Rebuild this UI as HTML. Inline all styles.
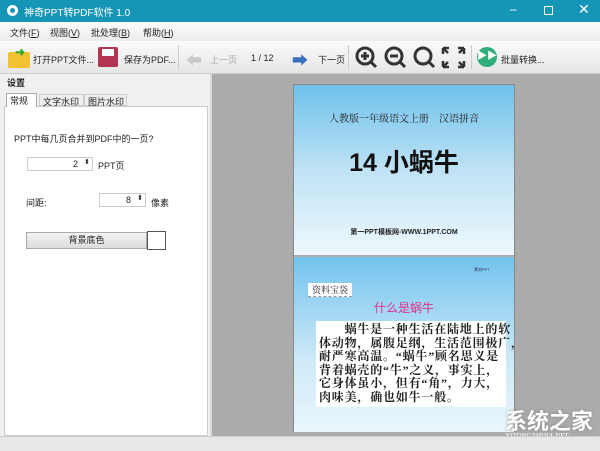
<!DOCTYPE html>
<html><head><meta charset="utf-8"><style>
*{margin:0;padding:0;box-sizing:border-box}
body{width:600px;height:451px;overflow:hidden;font-family:"Liberation Sans","Noto Sans CJK SC",sans-serif;font-size:9px;color:#222;background:#f0f0f0;position:relative}
.a{position:absolute}
.title{left:0;top:0;width:600px;height:22px;background:#1596b6;color:#fff;font-size:10px}
.menu{left:0;top:22px;width:600px;height:19px;background:linear-gradient(#fbfbfb,#ececec)}
.tool{left:0;top:41px;width:600px;height:33px;background:linear-gradient(#fafafa,#e6e6e6);border-bottom:1px solid #ccc}
.sep{width:1px;height:24px;background:#ccc;top:4px}
.right{left:212px;top:74px;width:388px;height:362px;background:#ababab}
.left{left:0;top:74px;width:212px;height:362px;background:#f0f0f0;border-right:2px solid #d8d8d8}
.panel{left:4px;top:106px;width:204px;height:330px;background:#fff;border:1px solid #ccc}
.spin{background:#fff;border:1px solid #ccc;height:14px;text-align:right;padding-right:14px;line-height:12px}
.slide{left:293px;top:84px;width:222px;height:348px;border:1px solid #888}
.s1{left:0;top:0;width:220px;height:170px;background:linear-gradient(#6fc0ea,#bfe3f6 50%,#eef8fd)}
.s2{left:0;top:172px;width:220px;height:175px;background:linear-gradient(#72c4ee,#cfeaf8 60%,#e9f6fc)}
.status{left:0;top:436px;width:600px;height:15px;background:#e8e8e8;border-top:1px solid #ccc}
.serif{font-family:"Liberation Serif","Noto Serif CJK SC",serif}
</style></head><body>
<div class="a title"><div class="a" style="left:7px;top:5px;width:11px;height:11px;border-radius:50%;background:#fff"><div class="a" style="left:3px;top:3px;width:5px;height:5px;border-radius:50%;background:#1596b6"></div></div><span class="a" style="left:24px;top:4px">神奇PPT转PDF软件 1.0</span>
<span class="a" style="left:510px;top:2px;font-size:12px">–</span><div class="a" style="left:544px;top:6px;width:9px;height:9px;border:1px solid #fff"></div><span class="a" style="left:578px;top:1px;font-size:14px">✕</span></div>
<div class="a menu"><span class="a" style="left:10px;top:4px">文件(<u>F</u>)</span><span class="a" style="left:50px;top:4px">视图(<u>V</u>)</span><span class="a" style="left:91px;top:4px">批处理(<u>B</u>)</span><span class="a" style="left:143px;top:4px">帮助(<u>H</u>)</span></div>
<div class="a tool">
<div class="a" style="left:8px;top:11px;width:22px;height:16px;background:#f2c230;border-radius:2px"></div><div class="a" style="left:15px;top:4px;color:#3a3;font-size:12px;font-weight:bold">➜</div>
<span class="a" style="left:33px;top:12px">打开PPT文件...</span>
<div class="a" style="left:98px;top:6px;width:20px;height:20px;background:#b23450;border-radius:2px"><div class="a" style="left:4px;top:2px;width:12px;height:7px;background:#fff"></div></div>
<span class="a" style="left:124px;top:12px">保存为PDF...</span>
<div class="a sep" style="left:178px"></div>
<span class="a" style="left:186px;top:6px;font-size:16px;color:#c8c8c8">⬅</span><span class="a" style="left:210px;top:12px;color:#aaa">上一页</span>
<span class="a" style="left:251px;top:12px">1 / 12</span>
<span class="a" style="left:292px;top:6px;font-size:16px;color:#3a6fc0">➡</span><span class="a" style="left:318px;top:12px">下一页</span>
<div class="a sep" style="left:348px"></div>
<svg class="a" style="left:353px;top:4px" width="120" height="26" viewBox="0 0 120 26" fill="none" stroke="#333" stroke-width="3">
<circle cx="12" cy="11" r="8"/><path d="M18 17l5 5M8 11h8M12 7v8"/>
<circle cx="41" cy="11" r="8"/><path d="M47 17l5 5M37 11h8"/>
<circle cx="70" cy="11" r="8"/><path d="M76 17l5 5"/>
<path d="M90 3h6M90 3v6M90 3l5 5M111 3h-6M111 3v6M111 3l-5 5M90 22h6M90 22v-6M90 22l5-5M111 22h-6M111 22v-6M111 22l-5-5" stroke-width="2.5"/></svg>
<div class="a sep" style="left:471px"></div>
<div class="a" style="left:477px;top:6px;width:20px;height:20px;border-radius:50%;background:#2fae7a;color:#fff;font-size:10px;text-align:center;line-height:20px">▶▶</div>
<span class="a" style="left:501px;top:12px">批量转换...</span>
</div>
<div class="a left"></div>
<span class="a" style="left:7px;top:76px;font-weight:bold">设置</span>
<div class="a panel"></div>
<div class="a" style="left:6px;top:93px;width:31px;height:14px;background:#fff;border:1px solid #aaa;border-bottom:none;padding-left:3px">常规</div>
<div class="a" style="left:39px;top:94px;width:45px;height:12px;border:1px solid #ccc;padding-left:3px;background:#eee">文字水印</div>
<div class="a" style="left:84px;top:94px;width:43px;height:12px;border:1px solid #ccc;padding-left:3px;background:#eee">图片水印</div>
<span class="a" style="left:14px;top:132px">PPT中每几页合并到PDF中的一页?</span>
<div class="a spin" style="left:27px;top:157px;width:66px">2</div><span class="a" style="left:84px;top:158px;font-size:7px">⬍</span><span class="a" style="left:98px;top:159px">PPT页</span>
<span class="a" style="left:26px;top:196px">间距:</span>
<div class="a spin" style="left:99px;top:193px;width:47px">8</div><span class="a" style="left:137px;top:194px;font-size:7px">⬍</span><span class="a" style="left:151px;top:196px">像素</span>
<div class="a" style="left:26px;top:232px;width:121px;height:17px;background:linear-gradient(#f4f4f4,#dcdcdc);border:1px solid #aaa;text-align:center;line-height:15px">背景底色</div>
<div class="a" style="left:147px;top:231px;width:19px;height:19px;background:#fff;border:1px solid #555"></div>
<div class="a right"></div>
<div class="a slide">
<div class="a s1">
<div class="a serif" style="left:0;width:220px;top:25px;text-align:center;font-size:10px">人教版一年级语文上册　汉语拼音</div>
<div class="a" style="left:0;width:220px;top:58px;text-align:center;font-size:25px;font-weight:bold;color:#111">14 小蜗牛</div>
<div class="a" style="left:0;width:220px;top:142px;text-align:center;font-size:7px;font-weight:bold">第一PPT模板网-WWW.1PPT.COM</div>
</div>
<div class="a s2">
<div class="a" style="left:180px;top:10px;font-size:4px;color:#335">素材PPT</div>
<div class="a serif" style="left:14px;top:26px;background:#fff;padding:0 4px;font-size:9px;border-bottom:1px dashed #999">资料宝袋</div>
<div class="a" style="left:0;width:220px;top:42px;text-align:center;font-size:12px;color:#e0338c">什么是蜗牛</div>
<div class="a serif" style="left:22px;top:64px;width:190px;height:86px;background:#fff;padding:2px 3px;font-size:12px;line-height:13.6px;font-weight:bold;color:#222;letter-spacing:0.8px;white-space:nowrap">　　蜗牛是一种生活在陆地上的软<br>体动物，属腹足纲，生活范围极广，<br>耐严寒高温。“蜗牛”顾名思义是<br>背着蜗壳的“牛”之义，事实上，<br>它身体虽小，但有“角”，力大，<br>肉味美，确也如牛一般。</div>
</div>
</div>
<div class="a" style="left:505px;top:404px;color:#fff;font-size:22px;font-weight:bold;text-shadow:0 0 3px #888">系统之家</div>
<div class="a serif" style="left:505px;top:432px;color:#fff;font-size:7px">XITONGZHIJIA.NET</div>
<div class="a status"></div>
</body></html>
